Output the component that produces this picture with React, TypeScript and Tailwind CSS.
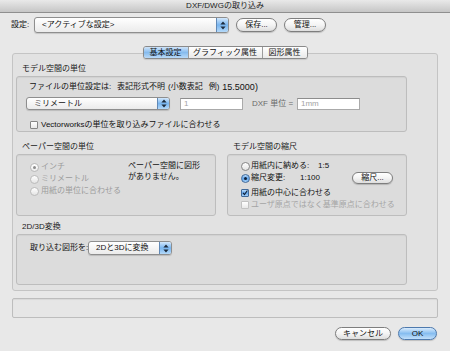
import React from 'react';

// Aqua-style stepper arrows for popup menus
const Arrows = () => (
  <svg width="6" height="9" viewBox="0 0 6 9">
    <path d="M3 0.5 L5.6 3.6 H0.4 Z M3 8.5 L5.6 5.4 H0.4 Z" fill="#1d2b3c" />
  </svg>
);

const Popup = ({ label, className }: { label: string; className: string }) => (
  <div
    className={`flex shrink-0 items-stretch rounded-[3px] border border-[#8e8e8e] bg-linear-to-b from-white to-[#ebebeb] shadow-[0_1px_1px_rgba(0,0,0,0.15)] ${className}`}
  >
    <span className="flex flex-1 items-center whitespace-nowrap pl-[7px] text-[#111]">{label}</span>
    <span className="flex w-[12px] items-center justify-center rounded-r-[2px] border-l border-[#6189b6] bg-linear-to-b from-[#d3e8fc] via-[#78b5ef] to-[#b4d9f9]">
      <Arrows />
    </span>
  </div>
);

const Button = ({ label, className, primary }: { label: string; className: string; primary?: boolean }) => (
  <div
    className={`flex shrink-0 items-center justify-center rounded-full border shadow-[0_1px_1px_rgba(0,0,0,0.18)] ${
      primary
        ? 'border-[#4d79ad] bg-linear-to-b from-[#d9ebfc] via-[#86bdf0] to-[#c2e0fb]'
        : 'border-[#7e7e7e] bg-linear-to-b from-white via-[#f4f4f4] to-[#dedede]'
    } ${className}`}
  >
    {label}
  </div>
);

const Radio = ({ state }: { state: 'off' | 'on' | 'disabledOn' | 'disabledOff' }) => {
  if (state === 'on')
    return (
      <span className="flex h-[9px] w-[9px] items-center justify-center rounded-full border border-[#3f6899] bg-linear-to-b from-[#bcdcf9] via-[#5ea3ea] to-[#a7d1f7]">
        <span className="h-[3px] w-[3px] rounded-full bg-[#10213a]" />
      </span>
    );
  if (state === 'disabledOn')
    return (
      <span className="flex h-[9px] w-[9px] items-center justify-center rounded-full border border-[#b9b9b9] bg-linear-to-b from-white to-[#ececec]">
        <span className="h-[3px] w-[3px] rounded-full bg-[#8c8c8c]" />
      </span>
    );
  return (
    <span
      className={`h-[9px] w-[9px] rounded-full border bg-linear-to-b from-white to-[#e4e4e4] ${
        state === 'off' ? 'border-[#868686]' : 'border-[#bbbbbb]'
      }`}
    />
  );
};

const Check = ({ checked, disabled }: { checked?: boolean; disabled?: boolean }) =>
  checked ? (
    <span className="flex h-[8px] w-[8px] items-center justify-center rounded-[1px] border border-[#3f6899] bg-linear-to-b from-[#bcdcf9] via-[#5ea3ea] to-[#a7d1f7]">
      <svg width="8" height="8" viewBox="0 0 8 8">
        <path d="M1.4 3.9 L3.3 6.2 L7.2 0.6" fill="none" stroke="#0f1f36" strokeWidth="1.5" />
      </svg>
    </span>
  ) : (
    <span
      className={`h-[8px] w-[8px] rounded-[1px] border bg-linear-to-b from-white to-[#e8e8e8] ${
        disabled ? 'border-[#c2c2c2]' : 'border-[#868686]'
      }`}
    />
  );

const Field = ({ value, className }: { value: string; className: string }) => (
  <div
    className={`flex items-center border border-[#aaaaaa] border-t-[#8d8d8d] bg-white pl-[3px] text-[#a3a3a3] ${className}`}
  >
    {value}
  </div>
);

const GroupLabel = ({ text }: { text: string }) => (
  <div className="h-[13px] pl-[6px] leading-[12px] text-[#1a1a1a]">{text}</div>
);

const groupBox = 'rounded-[3px] border border-[#bdbdbd] bg-[#dcdcdc] shadow-[inset_0_1px_1px_rgba(0,0,0,0.05)]';

export default function App() {
  return (
    <div className="flex h-[351px] w-[450px] flex-col overflow-hidden bg-[#e8e8e8] font-['Liberation_Sans','Noto_Sans_CJK_JP',sans-serif] text-[8px] leading-[12px] text-[#111]">
      {/* title bar */}
      <div className="flex h-[13px] items-center justify-center border-b border-[#8f8f8f] bg-linear-to-b from-[#e9e9e9] to-[#c6c6c6] text-[#222]">
        DXF/DWGの取り込み
      </div>

      {/* settings row */}
      <div className="mt-[4px] flex h-[16px] items-center pl-[11px]">
        <span className="w-[23px]">設定:</span>
        <Popup label="<アクティブな設定>" className="h-[16px] w-[195px]" />
        <Button label="保存..." className="ml-[7px] h-[14px] w-[41px]" />
        <Button label="管理..." className="ml-[7px] h-[14px] w-[42px]" />
      </div>

      {/* tabs */}
      <div className="relative z-10 -mb-[6px] mt-[13px] flex justify-center">
        <div className="flex h-[13px] overflow-hidden rounded-[3px] border border-[#8a8a8a] shadow-[0_1px_1px_rgba(0,0,0,0.12)]">
          <div className="flex w-[44px] items-center justify-center bg-linear-to-b from-[#cfe4f9] via-[#86bbee] to-[#b9daf8]">
            基本設定
          </div>
          <div className="flex w-[74px] items-center justify-center border-l border-[#9c9c9c] bg-linear-to-b from-white to-[#e9e9e9]">
            グラフィック属性
          </div>
          <div className="flex w-[45px] items-center justify-center border-l border-[#9c9c9c] bg-linear-to-b from-white to-[#e9e9e9]">
            図形属性
          </div>
        </div>
      </div>

      {/* tab panel */}
      <div className="mx-[12px] h-[238px] rounded-[3px] border border-[#c4c4c4] bg-[#e2e2e2] pl-[3px] pt-[9px]">
        {/* model space units */}
        <GroupLabel text="モデル空間の単位" />
        <div className={`h-[56px] w-[391px] pl-[9px] pt-[4px] ${groupBox}`}>
          <div className="flex whitespace-nowrap pl-[3px]">
            <span className="w-[88px]">ファイルの単位設定は:</span>
            <span>表記形式不明</span>
            <span className="ml-[3px]">(小数表記</span>
            <span className="ml-[6px]">例)</span>
            <span className="ml-[3px] text-[9px]">15.5000)</span>
          </div>
          <div className="mt-[4px] flex h-[13px] items-center">
            <Popup label="ミリメートル" className="h-[13px] w-[144px]" />
            <Field value="1" className="ml-[10px] h-[12px] w-[63px]" />
            <span className="ml-[9px] w-[45px] whitespace-nowrap text-[#6a6a6a]">DXF 単位 =</span>
            <Field value="1mm" className="h-[12px] w-[63px]" />
          </div>
          <div className="mt-[9px] flex items-center pl-[4px]">
            <Check />
            <span className="ml-[3px]">Vectorworksの単位を取り込みファイルに合わせる</span>
          </div>
        </div>

        {/* paper space + model scale */}
        <div className="mt-[9px] flex gap-[11px]">
          <div>
            <GroupLabel text="ペーパー空間の単位" />
            <div className={`flex h-[62px] w-[200px] pl-[13px] pt-[6px] ${groupBox}`}>
              <div className="w-[98px] text-[#9b9b9b]">
                <div className="flex items-center">
                  <Radio state="disabledOn" />
                  <span className="ml-[2px]">インチ</span>
                </div>
                <div className="flex items-center">
                  <Radio state="disabledOff" />
                  <span className="ml-[2px]">ミリメートル</span>
                </div>
                <div className="flex items-center">
                  <Radio state="disabledOff" />
                  <span className="ml-[2px]">用紙の単位に合わせる</span>
                </div>
              </div>
              <div className="-mt-[1px] leading-[11px]">
                ペーパー空間に図形
                <br />
                がありません。
              </div>
            </div>
          </div>
          <div>
            <GroupLabel text="モデル空間の縮尺" />
            <div className={`h-[62px] w-[180px] pl-[13px] pt-[5px] ${groupBox}`}>
              <div className="flex items-center">
                <Radio state="off" />
                <span className="ml-[1px] w-[67px] whitespace-nowrap">用紙内に納める:</span>
                <span>1:5</span>
              </div>
              <div className="flex h-[12px] items-center">
                <Radio state="on" />
                <span className="ml-[1px] w-[49px] whitespace-nowrap">縮尺変更:</span>
                <span className="w-[52px]">1:100</span>
                <Button label="縮尺..." className="h-[12px] w-[41px]" />
              </div>
              <div className="mt-[3px] flex items-center">
                <Check checked />
                <span className="ml-[2px]">用紙の中心に合わせる</span>
              </div>
              <div className="flex items-center text-[#a5a5a5]">
                <Check disabled />
                <span className="ml-[2px]">ユーザ原点ではなく基準原点に合わせる</span>
              </div>
            </div>
          </div>
        </div>

        {/* 2D/3D */}
        <div className="mt-[5px]">
          <GroupLabel text="2D/3D変換" />
          <div className={`h-[51px] w-[391px] pl-[13px] pt-[6px] ${groupBox}`}>
            <div className="flex items-center">
              <span className="w-[58px] shrink-0 whitespace-nowrap">取り込む図形を:</span>
              <Popup label="2Dと3Dに変換" className="h-[14px] w-[84px]" />
            </div>
          </div>
        </div>
      </div>

      {/* status box */}
      <div className="mx-[12px] mt-[7px] h-[20px] rounded-[2px] border border-[#bdbdbd] bg-[#e6e6e6] shadow-[inset_0_1px_1px_rgba(0,0,0,0.06)]" />

      {/* bottom buttons */}
      <div className="mt-[9px] flex justify-end pr-[13px]">
        <Button label="キャンセル" className="h-[13px] w-[56px]" />
        <Button label="OK" primary className="ml-[7px] h-[13px] w-[39px]" />
      </div>
    </div>
  );
}
